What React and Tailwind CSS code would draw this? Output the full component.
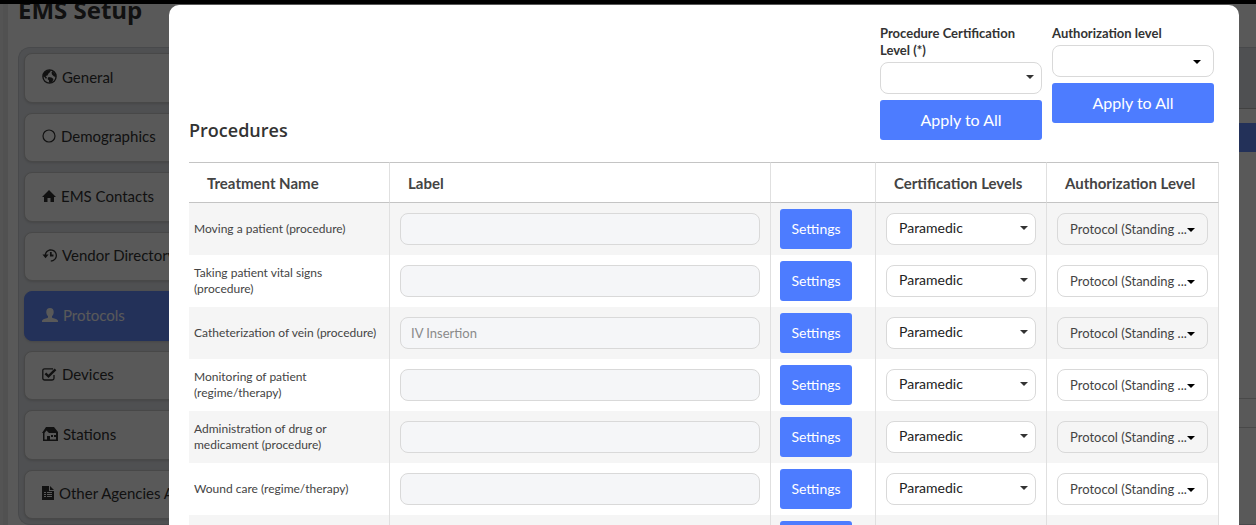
import clsx from 'clsx';
import { ImHistory } from 'react-icons/im';

function GlobeIcon({ className }) {
  return (
    <svg viewBox="0 0 15 15" className={className}>
      <circle cx="7.500" cy="7.500" r="6.600" fill="none" stroke="currentColor" strokeWidth="1.400" />
      <path
        fill="currentColor"
        d="M6 1.200 9 1 8.200 3 6.500 4.500 5.500 6.500 3.500 7 5 8.500 4 10 2.500 8 1 7.500 1.500 4zM10.500 2 13.500 5.500 14 8 12 7.500 10 5.500 9.500 3.500zM6.500 8 9.500 8.500 11.500 10 10.500 12.500 8.500 14 7 13.500 7 11.500 5.500 10z"
      />
    </svg>
  );
}

function CircleIcon({ className }) {
  return (
    <svg viewBox="0 0 14 14" fill="none" stroke="currentColor" className={className}>
      <circle cx="7" cy="7" r="6" strokeWidth="1.200" />
    </svg>
  );
}

function HomeIcon({ className }) {
  return (
    <svg viewBox="0 0 14 14" fill="currentColor" className={className}>
      <path d="M7 1l7 7h-2v5H8.500V9h-3v4H2V8H0z" />
    </svg>
  );
}

function UserIcon({ className }) {
  return (
    <svg viewBox="0 0 16 16" fill="currentColor" className={className}>
      <path d="M8 1c2.400 0 3.700 1.500 3.700 3.900 0 1.900-.7 3.400-1.700 4.200v1.100c0 .4.300.7.7.8l3.300 1c1.200.4 2 1.200 2 2.500v.5H0v-.5c0-1.300.8-2.100 2-2.500l3.300-1c.4-.1.7-.4.7-.8V9.100c-1-.8-1.700-2.300-1.700-4.200C4.300 2.500 5.600 1 8 1z" />
    </svg>
  );
}

function CheckIcon({ className }) {
  return (
    <svg viewBox="0 0 15 14" fill="none" stroke="currentColor" className={className}>
      <path d="M12 8v3.200a1.800 1.800 0 0 1-1.800 1.800H2.600A1.800 1.800 0 0 1 .8 11.200V3.600a1.800 1.800 0 0 1 1.800-1.800h7.600l.8.2" strokeWidth="1.300" />
      <path d="m3.400 6.300 3.100 3.100 7-7" strokeWidth="2.400" />
    </svg>
  );
}

function StationIcon({ className }) {
  return (
    <svg viewBox="0 0 16 16" fill="currentColor" className={className}>
      <path
        fillRule="evenodd"
        d="M4 1h8l4 5v9H1V7H0zM4.500 4.500 2.500 7v6.500H5V10h3v3.500h6V7H7zM9 9h2v2H9zm3 0h2v2h-2z"
      />
    </svg>
  );
}

function FileIcon({ className }) {
  return (
    <svg viewBox="0 0 12 16" fill="currentColor" className={className}>
      <path
        fillRule="evenodd"
        d="M0 1h7v5h5v9H0zM8 1l4 4H8zM2 7v1h2V7zm3 0v1h5V7zM2 9v1h2V9zm3 0v1h5V9zm-3 2v1h2v-1zm3 0v1h5v-1z"
      />
    </svg>
  );
}

const menuItems = [
  { title: 'General', icon: GlobeIcon, iconSize: 'h-[15px] w-[15px]' },
  { title: 'Demographics', icon: CircleIcon, iconSize: 'h-[14px] w-[14px]' },
  { title: 'EMS Contacts', icon: HomeIcon, iconSize: 'h-[14px] w-[14px]' },
  { title: 'Vendor Directory', icon: ImHistory, iconSize: 'h-[15px] w-[15px]' },
  { title: 'Protocols', icon: UserIcon, iconSize: 'h-4 w-4', active: true },
  { title: 'Devices', icon: CheckIcon, iconSize: 'h-[14px] w-[15px]' },
  { title: 'Stations', icon: StationIcon, iconSize: 'h-4 w-4' },
  { title: 'Other Agencies Available', icon: FileIcon, iconSize: 'h-4 w-3' },
];

const procedures = [
  { name: 'Moving a patient (procedure)', label: '' },
  { name: 'Taking patient vital signs (procedure)', label: '' },
  { name: 'Catheterization of vein (procedure)', label: 'IV Insertion' },
  { name: 'Monitoring of patient (regime/therapy)', label: '' },
  { name: 'Administration of drug or medicament (procedure)', label: '' },
  { name: 'Wound care (regime/therapy)', label: '' },
  { name: 'Splinting (procedure)', label: '' },
];

function Select({ options, plain, ...props }) {
  return (
    <div className="relative">
      <select
        className={clsx(
          'block h-8 w-full appearance-none rounded-lg border border-[#d9d9d9]',
          plain
            ? 'bg-transparent px-3 pt-px text-[13px] text-[#444]'
            : 'bg-white px-3 pb-0.5 text-sm text-[#222]'
        )}
        {...props}
      >
        {options.map((option) => (
          <option key={option}>{option}</option>
        ))}
      </select>
      <svg
        viewBox="0 0 8 4"
        className={clsx(
          'pointer-events-none absolute h-1 w-2',
          plain ? 'top-[15px] right-[13px] text-black' : 'top-[13px] right-2 text-[#333]'
        )}
        fill="currentColor"
      >
        <path d="M0 0h8L4 4z" />
      </svg>
    </div>
  );
}

function BulkFilter({ id, label, plain }) {
  return (
    <div className="flex w-[162px] flex-col">
      <label htmlFor={id} className="mb-[3px] text-[13px] leading-[17px] font-bold text-[#333]">
        {label}
      </label>
      <Select id={id} options={['']} plain={plain} />
      <button type="button" className="mt-1.5 h-10 rounded-[3px] bg-[#4d7cff] text-base text-white">
        Apply to All
      </button>
    </div>
  );
}

function SetupPage() {
  return (
    <div className="-mt-2.5 flex">
      <div className="w-2 shrink-0 border-l-3 border-[#f0f0f0] bg-[#e8e8e8]"></div>
      <div className="min-w-0 flex-1 pl-2.5">
        <h1 className="mb-[21px] font-['Open_Sans',sans-serif] text-2xl leading-8 font-bold text-[#333]">
          EMS Setup
        </h1>
        <div className="flex rounded-l-xl border border-r-0 border-[#cfd2d8] bg-[#e2e5ea]">
          <nav className="w-[260px] p-[5px]">
            <ul className="grid min-h-[466px] auto-rows-fr gap-2.5">
              {menuItems.map((item) => (
                <li key={item.title} className="flex">
                  <a
                    href="#"
                    className={clsx(
                      'flex flex-1 items-center gap-[5px] rounded-lg border px-[17px] pb-0.5 text-[15px] shadow-sm',
                      item.active
                        ? 'border-[#668cff] bg-[#668cff] text-white'
                        : 'border-[#cdcdcd] bg-white text-[#333]'
                    )}
                  >
                    <item.icon className={clsx('shrink-0', item.iconSize)} />
                    {item.title}
                  </a>
                </li>
              ))}
            </ul>
          </nav>
          <div className="flex-1 pt-[60px]">
            <div className="h-full border-t border-[#bbb] bg-white pt-3.5">
              <div className="h-[29px] bg-[#668cff]"></div>
              <div className="mt-[246px] h-[30px] border-y border-[#d0d0d0]"></div>
            </div>
          </div>
        </div>
      </div>
    </div>
  );
}

function ProceduresTable() {
  const heading =
    'border-y border-r border-y-[#c4c4c4] border-r-[#e0e0e0] pt-0.5 pr-3 pl-[18px]';
  const cell = 'border-r border-[#e0e0e0] px-2.5';

  return (
    <table className="w-full table-fixed border-separate border-spacing-0">
      <colgroup>
        <col className="w-[201px]" />
        <col />
        <col className="w-[105px]" />
        <col className="w-[171px]" />
        <col className="w-[172px]" />
      </colgroup>
      <thead>
        <tr className="h-[41px] text-left text-[15px] font-bold whitespace-nowrap text-[#444]">
          <th className={heading}>Treatment Name</th>
          <th className={heading}>Label</th>
          <th className={heading} aria-label="Settings"></th>
          <th className={heading}>Certification Levels</th>
          <th className={heading}>Authorization Level</th>
        </tr>
      </thead>
      <tbody>
        {procedures.map((procedure) => (
          <tr key={procedure.name} className="h-[52px] odd:bg-[#f5f5f5]">
            <td className="border-r border-[#e0e0e0] px-[5px] text-xs leading-4 text-[#444]">
              {procedure.name}
            </td>
            <td className={cell}>
              <input
                type="text"
                aria-label={`Label for ${procedure.name}`}
                defaultValue={procedure.label}
                className="block h-8 w-full rounded-lg border border-[#d9d9d9] bg-[#f5f6f8] px-2.5 text-[13px] text-[#8a8a8a]"
              />
            </td>
            <td className="border-r border-[#e0e0e0] px-[9px]">
              <button
                type="button"
                className="block h-10 w-[72px] rounded-[3px] bg-[#4d7cff] text-sm text-white"
              >
                Settings
              </button>
            </td>
            <td className={cell}>
              <Select
                aria-label={`Certification level for ${procedure.name}`}
                options={['Paramedic']}
              />
            </td>
            <td className={cell}>
              <Select
                aria-label={`Authorization level for ${procedure.name}`}
                options={['Protocol (Standing ...']}
                plain
              />
            </td>
          </tr>
        ))}
      </tbody>
    </table>
  );
}

export default function App() {
  return (
    <div className="flex h-screen flex-col bg-white font-['Lato',sans-serif]">
      <div className="h-1 shrink-0 bg-black"></div>
      <div className="relative flex-1 overflow-hidden">
        <SetupPage />

        <div className="absolute inset-0 bg-black/65 pt-px pr-[17px] pl-[169px]">
          <div role="dialog" aria-label="Procedures" className="rounded-t-[10px] bg-white px-5 pt-5">
            <div className="mb-[22px] flex items-end justify-between">
              <h2 className="font-['Open_Sans',sans-serif] text-lg leading-5 font-semibold text-[#333]">
                Procedures
              </h2>
              <div className="flex items-start gap-2.5 pr-[5px]">
                <BulkFilter id="certification" label="Procedure Certification Level (*)" />
                <BulkFilter id="authorization" label="Authorization level" plain />
              </div>
            </div>
            <ProceduresTable />
          </div>
        </div>
      </div>
    </div>
  );
}
